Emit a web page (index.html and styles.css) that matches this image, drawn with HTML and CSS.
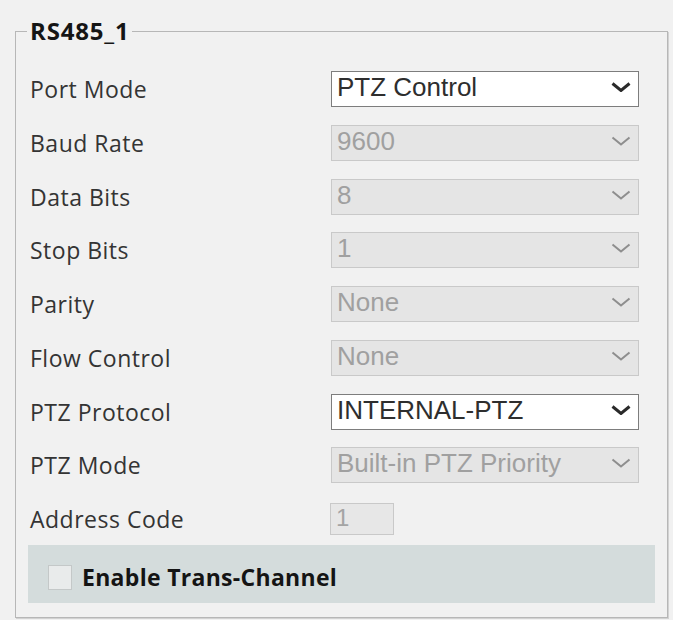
FILE: index.html
```html
<!DOCTYPE html>
<html lang="en">
<head>
  <meta charset="UTF-8">
  <meta name="viewport" content="width=device-width, initial-scale=1.0">
  <link rel="stylesheet" href="styles.css">
  <title>RS485</title>
</head>
<body>
  <fieldset class="panel">
    <legend>RS485_1</legend>
    <div class="rows">
      <label class="label">Port Mode</label>
      <div class="select">
        <span class="value">PTZ Control</span>
        <svg class="arrow" width="20" height="10" viewBox="0 0 20 10"><polyline points="1.5,1.5 10,8.5 18.5,1.5"/></svg>
      </div>

      <label class="label">Baud Rate</label>
      <div class="select disabled">
        <span class="value">9600</span>
        <svg class="arrow" width="20" height="10" viewBox="0 0 20 10"><polyline points="1.5,1.5 10,8.5 18.5,1.5"/></svg>
      </div>

      <label class="label">Data Bits</label>
      <div class="select disabled">
        <span class="value">8</span>
        <svg class="arrow" width="20" height="10" viewBox="0 0 20 10"><polyline points="1.5,1.5 10,8.5 18.5,1.5"/></svg>
      </div>

      <label class="label">Stop Bits</label>
      <div class="select disabled">
        <span class="value">1</span>
        <svg class="arrow" width="20" height="10" viewBox="0 0 20 10"><polyline points="1.5,1.5 10,8.5 18.5,1.5"/></svg>
      </div>

      <label class="label">Parity</label>
      <div class="select disabled">
        <span class="value">None</span>
        <svg class="arrow" width="20" height="10" viewBox="0 0 20 10"><polyline points="1.5,1.5 10,8.5 18.5,1.5"/></svg>
      </div>

      <label class="label">Flow Control</label>
      <div class="select disabled">
        <span class="value">None</span>
        <svg class="arrow" width="20" height="10" viewBox="0 0 20 10"><polyline points="1.5,1.5 10,8.5 18.5,1.5"/></svg>
      </div>

      <label class="label">PTZ Protocol</label>
      <div class="select">
        <span class="value">INTERNAL-PTZ</span>
        <svg class="arrow" width="20" height="10" viewBox="0 0 20 10"><polyline points="1.5,1.5 10,8.5 18.5,1.5"/></svg>
      </div>

      <label class="label">PTZ Mode</label>
      <div class="select disabled">
        <span class="value">Built-in PTZ Priority</span>
        <svg class="arrow" width="20" height="10" viewBox="0 0 20 10"><polyline points="1.5,1.5 10,8.5 18.5,1.5"/></svg>
      </div>

      <label class="label">Address Code</label>
      <div class="input disabled">1</div>
    </div>

    <div class="trans">
      <span class="checkbox"></span>
      <span class="trans-label">Enable Trans-Channel</span>
    </div>
  </fieldset>
</body>
</html>
```

FILE: styles.css
```css
html, body {
  height: 620px;
  overflow: hidden;
}

body {
  margin: 0;
  background-color: #f1f1f1;
  font-family: "Open Sans", Lato, sans-serif;
  color: #333;
}

.panel {
  margin: 19px 5px 0 15px;
  padding: 0 11px 14px 14px;
  border: 1px solid #b7b7b7;
  box-shadow: 1px 1px 0 #d2d2d2;
}

.panel legend {
  margin-left: -3px;
  padding: 0 3px;
  font-size: 24px;
  line-height: 24px;
  font-weight: 700;
  letter-spacing: 0.8px;
  color: #151515;
}

.rows {
  display: grid;
  grid-template-columns: 301px 308px;
  grid-auto-rows: 36px;
  row-gap: 17.75px;
  align-items: center;
  margin-top: 28px;
}

.label {
  font-size: 23px;
  line-height: 28px;
  letter-spacing: 0.5px;
  color: #343434;
}

.select {
  display: flex;
  justify-content: space-between;
  align-items: flex-start;
  box-sizing: border-box;
  height: 36px;
  padding: 0 7px 0 5px;
  background-color: #fff;
  border: 1px solid #7d7d7d;
  font-family: "Liberation Sans", Arial, sans-serif;
  font-size: 26px;
  color: #2e2e2e;
}

.select .value {
  line-height: 30px;
  white-space: nowrap;
}

.arrow {
  margin-top: 10px;
  fill: none;
  stroke: #2a2a2a;
  stroke-width: 3;
}

.select.disabled {
  background-color: #e5e5e5;
  border-color: #c9c9c9;
  color: #a0a0a0;
}

.select.disabled .arrow {
  stroke: #8e8e8e;
  stroke-width: 2;
}

.input {
  box-sizing: border-box;
  width: 64px;
  height: 32px;
  margin-left: -1px;
  padding-left: 5px;
  font-family: "Liberation Sans", Arial, sans-serif;
  font-size: 24px;
  line-height: 28px;
}

.input.disabled {
  background-color: #e7e7e7;
  border: 1px solid #c9c9c9;
  color: #a4a4a4;
}

.trans {
  display: flex;
  align-items: center;
  height: 58px;
  box-sizing: border-box;
  margin: 8px 1px 0 -2px;
  padding: 6px 0 0 20px;
  background-color: #d4dcdc;
}

.checkbox {
  width: 24px;
  height: 25px;
  box-sizing: border-box;
  border: 1px solid #c4c8c8;
  background-color: #e9ebeb;
}

.trans-label {
  margin-left: 10px;
  font-size: 23px;
  font-weight: 700;
  letter-spacing: 0.3px;
  color: #141414;
}
```
